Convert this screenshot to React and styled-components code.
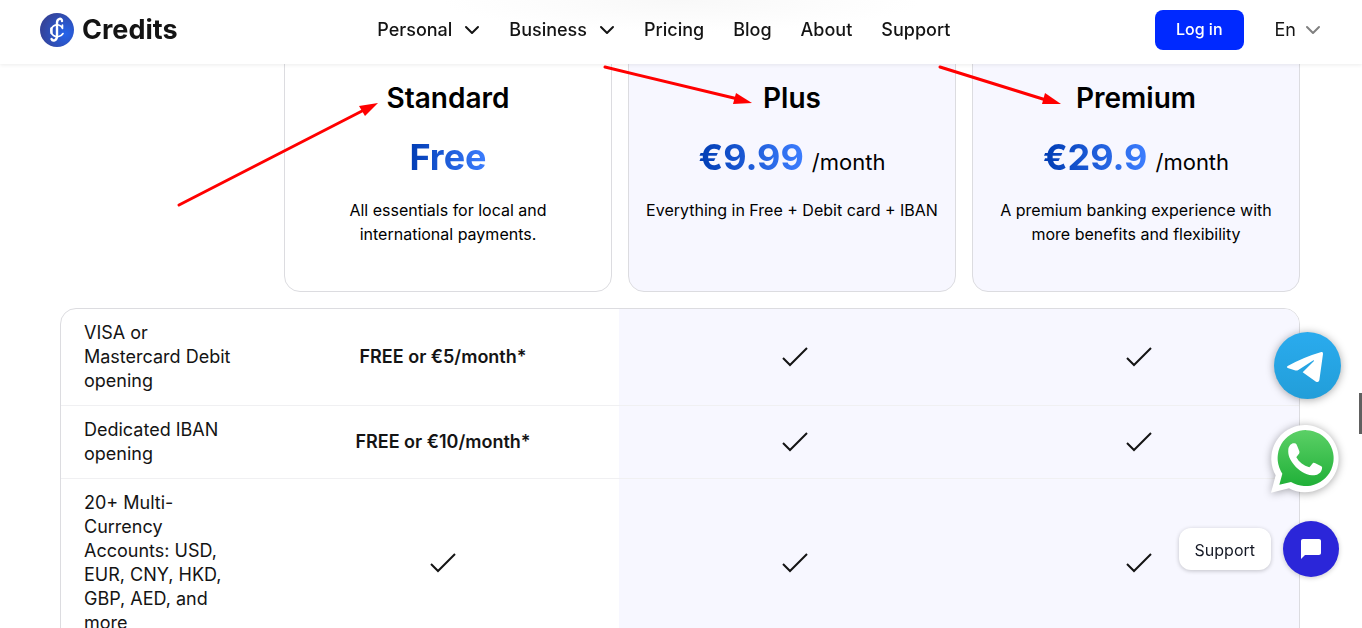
import React from 'react';
import styled, { createGlobalStyle } from 'styled-components';

const GlobalStyle = createGlobalStyle`
  * {
    box-sizing: border-box;
  }

  body {
    margin: 0;
    background: #fff;
    color: #000;
    font-family: Inter, 'Liberation Sans', sans-serif;
    font-size: 16px;
    line-height: 24px;
  }
`;

const Page = styled.div`
  position: relative;
  height: 100vh;
  overflow: hidden;
`;

const Header = styled.header`
  position: sticky;
  top: 0;
  z-index: 2;
  display: flex;
  align-items: center;
  justify-content: space-between;
  height: 64px;
  padding: 0 41px 4px 40px;
  background: radial-gradient(240px 32px at 50% 0, #f8f8f8, #fff);
  box-shadow: 0 1px 4px rgba(0, 0, 0, 0.08);
`;

const Brand = styled.a`
  display: flex;
  align-items: center;
  gap: 8px;
  color: #141414;
  font-size: 27px;
  font-weight: 700;
  text-decoration: none;
`;

const Nav = styled.nav`
  display: flex;
  align-items: center;
  gap: 29px;
  padding-right: 5px;
`;

const NavLink = styled.a`
  color: #141414;
  font-size: 18px;
  font-weight: 500;
  text-decoration: none;
`;

const MenuButton = styled.button`
  display: flex;
  align-items: center;
  gap: ${({ $gap }) => $gap || '12px'};
  padding: 0;
  border: 0;
  background: none;
  color: #141414;
  font: inherit;
  font-size: 18px;
  font-weight: ${({ $weight }) => $weight || 500};
`;

const Actions = styled.div`
  display: flex;
  align-items: center;
  gap: 31px;
`;

const LoginButton = styled.button`
  height: 40px;
  padding: 0 21px 2px;
  border: 0;
  border-radius: 8px;
  background: #0029ff;
  color: #fff;
  font: inherit;
  font-weight: 500;
`;

const Main = styled.main`
  padding: 0 62px 0 60px;
`;

const Plans = styled.section`
  display: grid;
  grid-template-columns: 208px repeat(3, 1fr);
  gap: 16px;
  margin-top: -16px;
`;

const PlanCard = styled.article`
  min-height: 244px;
  padding: 31px 15px;
  border: 1px solid #dcdce0;
  border-radius: 16px;
  background: ${({ $tinted }) => ($tinted ? '#f7f7ff' : '#fff')};
  text-align: center;

  &:first-child {
    grid-column: 2;
  }
`;

const PlanName = styled.h2`
  margin: 0 0 20px;
  font-size: 28px;
  font-weight: 600;
  line-height: 36px;
`;

const Price = styled.div`
  margin-bottom: 20px;
  font-size: 36px;
  line-height: 42px;
`;

const Amount = styled.span`
  background: linear-gradient(90deg, #003cb3, #3d7eff);
  background-clip: text;
  color: transparent;
  font-weight: 700;
`;

const Period = styled.span`
  margin-left: 8px;
  font-size: 22px;
  line-height: 24px;
`;

const PlanText = styled.p`
  margin: 0 auto;
  max-width: ${({ $wide }) => ($wide ? 'none' : '280px')};
`;

const TableFrame = styled.div`
  margin-top: 16px;
  border: 1px solid #dcdce0;
  border-radius: 16px;
  overflow: hidden;
`;

const Table = styled.table`
  width: 100%;
  table-layout: fixed;
  border-collapse: separate;
  border-spacing: 0;
  color: #141414;
  font-size: 18px;
`;

const Feature = styled.th`
  width: 206px;
  padding: 12px 32px 12px 23px;
  border-bottom: 1px solid #f0f0f2;
  font-weight: 400;
  text-align: left;
`;

const Cell = styled.td`
  padding: 0;
  border-bottom: 1px solid #f0f0f2;
  background: ${({ $tinted }) => ($tinted ? '#f7f7ff' : 'transparent')};
  font-weight: 600;
  text-align: center;
  vertical-align: middle;

  &:last-child {
    width: 328px;
    padding-left: 8px;
  }

  svg {
    display: block;
    margin: 0 auto;
  }
`;

const Arrows = styled.svg`
  position: absolute;
  top: 0;
  left: 0;
  z-index: 3;
  pointer-events: none;
`;

const Contacts = styled.aside`
  position: fixed;
  right: 21px;
  bottom: 51px;
  z-index: 4;
  display: flex;
  flex-direction: column;
  align-items: flex-end;
`;

const ContactLink = styled.a`
  display: block;
  height: 68px;
  margin: 0 ${({ $inset }) => $inset || '0'} 25px 0;
  filter: drop-shadow(0 1px 4px rgba(0, 0, 0, 0.35));

  svg {
    display: block;
  }
`;

const ChatRow = styled.div`
  display: flex;
  align-items: center;
  gap: 12px;
  padding: 3px 2px 0 0;
`;

const ChatLabel = styled.button`
  height: 42px;
  padding: 2px 16px 0;
  border: 0;
  border-radius: 12px;
  background: #fff;
  box-shadow: 0 1px 4px rgba(0, 0, 0, 0.22);
  color: #141824;
  font: inherit;
`;

const ChatButton = styled.button`
  display: flex;
  align-items: center;
  justify-content: center;
  width: 56px;
  height: 56px;
  padding: 0;
  border: 0;
  border-radius: 50%;
  background: #2b26d9;
  box-shadow: 0 1px 5px rgba(0, 0, 0, 0.2);
`;

const ScrollThumb = styled.div`
  position: fixed;
  top: 393px;
  right: 0;
  z-index: 5;
  width: 3px;
  height: 41px;
  background: #606060;
`;

const Chevron = ({ color = '#141414' }) => (
  <svg width="16" height="10" viewBox="0 0 16 10" fill="none" aria-hidden="true">
    <path d="M2 2l6 6 6-6" stroke={color} strokeWidth="2" strokeLinecap="round" strokeLinejoin="round" />
  </svg>
);

const Check = () => (
  <svg width="28" height="20" viewBox="0 0 28 20" fill="none" role="img" aria-label="Included">
    <path d="M2 11l7 7L26 1" stroke="#141414" strokeWidth="2" />
  </svg>
);

const Logo = () => (
  <svg width="34" height="34" viewBox="0 0 34 34" fill="none" aria-hidden="true">
    <defs>
      <radialGradient id="coin" cx="0.75" cy="0.6" r="0.7">
        <stop offset="0" stopColor="#2463ea" />
        <stop offset="1" stopColor="#34449c" />
      </radialGradient>
    </defs>
    <circle cx="17" cy="17" r="17" fill="url(#coin)" />
    <g stroke="#fff" strokeLinecap="round" strokeLinejoin="round">
      <path d="M22 8c0-3.500-5-3-5 2v13c0 5-4.500 5.500-5.500 3" strokeWidth="2.400" />
      <path d="M22.500 12v3.500c-1.500-4-6-4.500-9-2.500-3.500 2.500-3.500 7 0 9.500 3 2 7.500 1.500 9.500-2" strokeWidth="1.600" />
      <path d="M11.500 15.500v4.500" strokeWidth="2.400" />
    </g>
  </svg>
);

const Telegram = () => (
  <svg width="67" height="67" viewBox="0 0 201 201" aria-hidden="true">
    <defs>
      <linearGradient id="telegram" x1="0" y1="0" x2="0" y2="1">
        <stop offset="0" stopColor="#2aabee" />
        <stop offset="1" stopColor="#229ed9" />
      </linearGradient>
    </defs>
    <circle cx="100.500" cy="100.500" r="100.500" fill="url(#telegram)" />
    <path
      d="M41 102Q90 75 142 60Q148 59 147 66L136 145Q134 153 126 149L86 121L120 87Q121 83 116 86L73 114Q68 117 62 115L41 108Q36 105 41 102Z"
      fill="#fff"
    />
  </svg>
);

const WhatsApp = () => (
  <svg width="68" height="68" viewBox="0 0 204 204" aria-hidden="true">
    <defs>
      <linearGradient id="whatsapp" x1="0" y1="0" x2="0" y2="1">
        <stop offset="0" stopColor="#5bd066" />
        <stop offset="1" stopColor="#20b038" />
      </linearGradient>
    </defs>
    <path d="M0 203L14 151A101 101 0 1 1 54 190Z" fill="#fff" />
    <path d="M25 179L34 146A84 84 0 1 1 60 171Z" fill="url(#whatsapp)" />
    <path
      d="M52 72C54 62 61 55 68 55C76 54 76 57 79 64L85 79C87 86 80 91 76 97C84 112 98 122 115 127C119 124 122 117 126 114C130 112 134 116 139 118L151 124C155 126 153 131 152 135C148 147 135 152 123 151C103 149 83 137 69 119C58 106 50 92 52 72Z"
      fill="#fff"
    />
  </svg>
);

const plans = [
  { name: 'Standard', amount: 'Free', text: 'All essentials for local and international payments.' },
  { name: 'Plus', amount: '€9.99', period: '/month', text: 'Everything in Free + Debit card + IBAN', wide: true },
  {
    name: 'Premium',
    amount: '€29.9',
    period: '/month',
    text: 'A premium banking experience with more benefits and flexibility',
  },
];

const features = [
  { name: 'VISA or Mastercard Debit opening', standard: 'FREE or €5/month*' },
  { name: 'Dedicated IBAN opening', standard: 'FREE or €10/month*' },
  { name: '20+ Multi-Currency Accounts: USD, EUR, CNY, HKD, GBP, AED, and more' },
];

const App = () => (
  <Page>
    <GlobalStyle />
    <Header>
      <Brand href="#">
        <Logo />
        Credits
      </Brand>
      <Nav>
        <MenuButton>
          Personal
          <Chevron />
        </MenuButton>
        <MenuButton>
          Business
          <Chevron />
        </MenuButton>
        {['Pricing', 'Blog', 'About', 'Support'].map((label) => (
          <NavLink key={label} href="#">
            {label}
          </NavLink>
        ))}
      </Nav>
      <Actions>
        <LoginButton>Log in</LoginButton>
        <MenuButton $gap="9px" $weight={400}>
          En
          <Chevron color="#808080" />
        </MenuButton>
      </Actions>
    </Header>

    <Main>
      <Plans>
        {plans.map((plan, index) => (
          <PlanCard key={plan.name} $tinted={index > 0}>
            <PlanName>{plan.name}</PlanName>
            <Price>
              <Amount>{plan.amount}</Amount>
              {plan.period && <Period>{plan.period}</Period>}
            </Price>
            <PlanText $wide={plan.wide}>{plan.text}</PlanText>
          </PlanCard>
        ))}
      </Plans>

      <TableFrame>
        <Table>
          <tbody>
            {features.map((feature) => (
              <tr key={feature.name}>
                <Feature scope="row">{feature.name}</Feature>
                <Cell>{feature.standard || <Check />}</Cell>
                <Cell $tinted>
                  <Check />
                </Cell>
                <Cell $tinted>
                  <Check />
                </Cell>
              </tr>
            ))}
          </tbody>
        </Table>
      </TableFrame>
    </Main>

    <Arrows width="1100" height="220" aria-hidden="true">
      <g stroke="#f00" strokeWidth="3" strokeLinecap="round">
        <path d="M179 205L364 110" />
        <path d="M605 67L738 99" />
        <path d="M940 67L1046 100" />
      </g>
      <g fill="#f00">
        <path d="M378 103L359 106L365 116Z" />
        <path d="M752 103L736 93L733 104Z" />
        <path d="M1061 104L1045 93L1042 104Z" />
      </g>
    </Arrows>

    <Contacts>
      <ContactLink href="#" aria-label="Telegram">
        <Telegram />
      </ContactLink>
      <ContactLink href="#" aria-label="WhatsApp" $inset="2px">
        <WhatsApp />
      </ContactLink>
      <ChatRow>
        <ChatLabel>Support</ChatLabel>
        <ChatButton aria-label="Open chat">
          <svg width="24" height="24" viewBox="0 0 24 24" fill="#fff" aria-hidden="true">
            <path d="M20 2H4c-1.100 0-2 .9-2 2v18l4-4h14c1.100 0 2-.9 2-2V4c0-1.100-.9-2-2-2z" />
          </svg>
        </ChatButton>
      </ChatRow>
    </Contacts>
    <ScrollThumb />
  </Page>
);

export default App;
